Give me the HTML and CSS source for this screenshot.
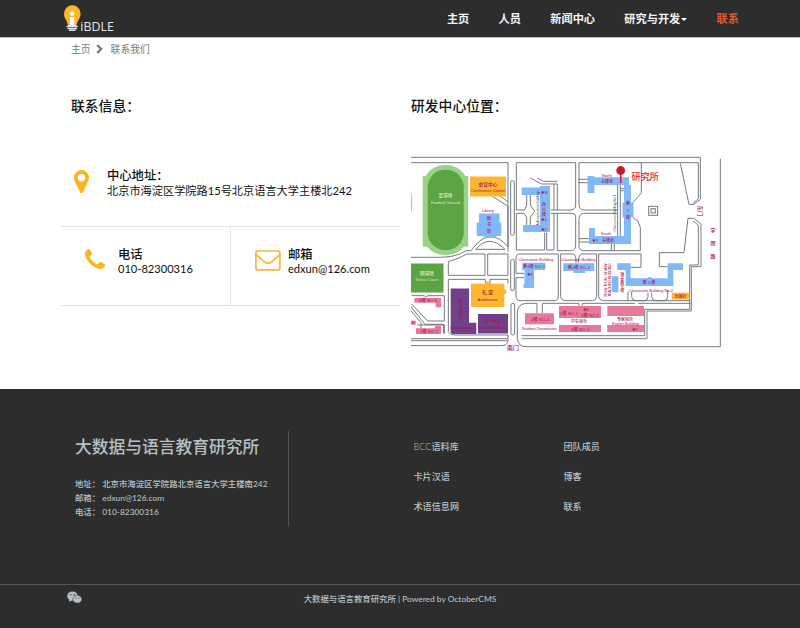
FILE: index.html
```html
<!DOCTYPE html>
<html lang="zh-CN">
<head>
<meta charset="utf-8">
<title>联系我们</title>
<link rel="stylesheet" href="styles.css">
</head>
<body>
<header class="header">
  <svg class="logo" width="54" height="32" viewBox="62 3 54 32">
    <path d="M67.500 24.500c0-4-3.500-5.500-3.500-11a8.300 8.300 0 0 1 16.600 0c0 5.500-3.600 7-3.600 11z" fill="#fdb62b"/>
    <circle cx="72.200" cy="13.500" r="2.200" fill="#fff"/>
    <path d="M70 17h4.300v7.500h2.200v1.500h-8.500v-1.500h2z" fill="#fff"/>
    <path d="M66.500 26.500h11.300M67.500 28.400h9.500M69 30.200h6.500" stroke="#d8dde2" stroke-width="1.500"/>
    <text x="80.300" y="31" textLength="33.500" lengthAdjust="spacingAndGlyphs" class="logo-text">iBDLE</text>
  </svg>
  <nav class="nav">
    <a>主页</a><a>人员</a><a>新闻中心</a><a class="drop">研究与开发<i class="caret"></i></a><a class="active">联系</a>
  </nav>
</header>
<div class="crumbs"><span>主页</span><svg width="7" height="10" viewBox="0 0 7 10"><path d="M1.200 1l4 4-4 4" fill="none" stroke="#777" stroke-width="2.200"/></svg><span>联系我们</span></div>
<main class="main">
  <section class="contact">
    <h2>联系信息：</h2>
    <div class="cell address">
      <svg width="15" height="23" viewBox="384 128 1024 1536" preserveAspectRatio="none"><path fill="#fcb51e" d="M1152 640q0-106-75-181t-181-75-181 75-75 181 75 181 181 75 181-75 75-181zm256 0q0 109-33 179l-364 774q-16 33-47.500 52t-67.500 19-67.500-19-46.500-52l-365-774q-33-70-33-179 0-212 150-362t362-150 362 150 150 362z"/></svg>
      <div><h3>中心地址：</h3><p class="addr-text">北京市海淀区学院路15号北京语言大学主楼北242</p></div>
    </div>
    <div class="pair">
      <div class="cell phone">
        <svg width="20" height="20" viewBox="192 128 1408 1408"><path fill="#fcb51e" d="M1600 1240q0 27-10 70.500t-21 68.500q-21 50-122 106-94 51-186 51-27 0-53-3.500t-57.500-12.500-47-14.500-55.500-20.500-49-18q-98-35-175-83-127-79-264-216t-216-264q-48-77-83-175-3-9-18-49t-20.500-55.500-14.500-47-12.500-57.500-3.500-53q0-92 51-186 56-101 106-122 25-11 68.500-21t70.500-10q14 0 21 3 18 6 53 76 11 19 30 54t35 63.500 31 53.500q3 4 17.500 25t21.500 35.500 7 28.500q0 20-28.500 50t-62 55-62 53-28.500 46q0 9 5 22.500t8.500 20.500 14 24 11.500 19q76 137 174 235t235 174q2 1 19 11.500t24 14 20.500 8.500 22.500 5q18 0 46-28.500t53-62 55-62 50-28.500q14 0 28.500 7t35.500 21.500 25 17.500q25 15 53.500 31t63.500 35 54 30q70 35 76 53 3 7 3 21z"/></svg>
        <div><h3>电话</h3><p>010-82300316</p></div>
      </div>
      <div class="cell mail">
        <svg width="26" height="21" viewBox="0 0 26 21"><g fill="none" stroke="#f9b83a" stroke-width="1.700"><rect x=".9" y="1" width="24" height="18.800" rx="2"/><path d="M1 4.500l9 7.800q3 2.200 6 0l9-7.800"/></g></svg>
        <div><h3>邮箱</h3><p>edxun@126.com</p></div>
      </div>
    </div>
  </section>
  <section class="location">
    <h2>研发中心位置：</h2>
    <svg class="map" width="320" height="205" viewBox="411 150 320 205">
      <g class="road" transform="translate(405 150) scale(.33333)">
        <path d="M18 22H886V148L866 163H852L826 40M18 38H309V305M334 38V180M334 38H512M522 38H880V146L864 160M946 26V590"/>
        <path d="M262 139L308 168M285 138L308 155M309 168V290M334 180H358L365 168V130M376 130V165L389 184L376 202V225M334 190H358L365 202V225M334 190V300H419V248M425 248V300H447V190M457 190V302H500Q512 300 512 285V200Q512 190 500 190H437M437 180H498Q512 178 512 165V38M376 84L410 102H457V180M397 84L415 94H457M447 102V180"/>
        <path d="M522 38V165Q524 180 536 180H636M522 285V205Q524 190 536 190H636M522 285Q522 302 536 302H706V232L698 212L684 203M709 38V128L698 142L684 158M520 88H550M520 98H550M522 266H552M522 276H552M619 280V302M628 280V302M638 104V258M646 104V258M646 116H660M646 122H660"/>
        <path d="M866 205H849L837 308H763V350H788M866 205L888 222V350H859V483H726V566H350M864 212L880 226V345H854V478H719V557H350"/>
        <path d="M18 322H105Q140 322 165 312L183 302H198Q252 225 309 290M212 298Q252 250 300 298ZM130 376V335Q165 325 185 312H240V376ZM248 312H309V376H248ZM309 400V388H255V402M241 402V388H130V545Q135 555 150 555H309V572Q306 587 290 587H18M18 566H309M18 572H306"/>
        <path d="M20 437H58L62 441L68 437H118V513H68L20 462M18 470L60 523H116V550M18 482L48 518V550M36 525H118V552"/>
        <path d="M460 312H345Q333 312 333 325V370H357M357 383H333V435Q333 452 345 452H452Q460 450 460 440V312"/>
        <path d="M513 338Q514 315 505 312H467V440Q467 450 480 452H562Q574 452 575 440V312H530Q520 316 520 338"/>
        <path d="M581 312H708V352H676M581 312V440Q583 452 595 452H669V425M680 425V440Q680 452 692 452H720Q729 450 729 440V428M740 428V440Q741 452 752 452H778Q788 450 788 440V420M669 452H856M856 460H700M690 460H532V472M522 472V460H412V490M396 490V460H362Q337 462 337 490V565Q340 590 360 590H946"/>
        <rect x="317" y="92" width="11" height="164" rx="5.500"/><rect x="317" y="328" width="11" height="94" rx="5.500"/><rect x="318" y="460" width="11" height="95" rx="5.500"/>
        <rect x="731" y="169" width="27" height="27"/><rect x="738" y="176" width="13" height="13"/>
      </g>
      <g fill="#9ad28a"><rect x="422.700" y="176" width="45.500" height="70.700"/><ellipse cx="445.500" cy="182" rx="21" ry="17"/><ellipse cx="445.500" cy="239" rx="21" ry="16"/></g>
      <rect x="427.700" y="169.700" width="36" height="80.500" rx="17.500" fill="#5ca344"/><rect x="411" y="263.500" width="32.500" height="29" fill="#5ca344"/>
      <path d="M411 191q2.500 10 0 24z" fill="#fdb733"/>
      <g fill="#fdb62f"><rect x="470" y="176.500" width="36" height="20"/><rect x="671.700" y="292.700" width="17.700" height="6.700"/><rect x="471" y="283.700" width="33.300" height="23.300"/><circle cx="487.700" cy="284.500" r="3"/><circle cx="504" cy="291.700" r="2.500"/></g>
      <g fill="#80b8fa">
        <path d="M479 213.500h20.500v9h1.800V236h-4.600l-3 2h-8l-3-2h-6v-13.500h2.300z"/>
        <path d="M521.700 187.500H540V186h10v46H523V225h17v-30H521.700z"/>
        <path d="M587.500 176h7v1.300H629V185h2v17.500h2.500v15H631V244h-42v-16h6v8h29v-18.500h-1.500v-15h1.500V185H594.500v8h-7z"/>
        <path d="M522.300 262.700h23v7.300H534v18h-10.500v-4h1V270h-2.200zM563.300 263.300h31v7.700h-9v2h-12v-2h-10zM611.700 276.300h6.700v16h-6.700zM617.300 263.300h13.300v15h16l3-1.500 3 1.500h15v-15H683v6.700h-9.600v16h-47.700v-16h-8.400z"/>
      </g>
      <path fill="#71408b" d="M450.700 288.500H469v34.200h7.300V334h-24l-1.600-1.500zM478 314h30v19.500h-30z"/>
      <path fill="#e7799b" d="M414.300 298H441v9.300h-5.300v-4.600h-21.400zM411 320.700h4.700v4H411zM416 328.300h19v-2.600h6V334h-25zM525 313.300h29v11h-29zM559 306h42v12h-42zM559 325h42v7h-42zM607.300 306H644v10h-36.700zM607.300 325H644v7h-36.700z"/>
      <g class="label pale"><text x="445.500" y="197" font-size="4.600">足球场</text><text x="445.500" y="203.500" textLength="29">Football Ground</text><text x="427" y="274.500" font-size="4.600">网球场</text><text x="426.500" y="281.300" textLength="23">Tennis Court</text></g>
      <g class="label">
        <text x="488" y="186" font-size="4.700">会议中心</text><text x="488" y="192" textLength="34">Conference Center</text><text x="488" y="212" textLength="12">Library</text>
        <text x="489" y="219.500">图</text><text x="489" y="226">书</text><text x="489" y="233">馆</text>
        <text x="544" y="206">办</text><text x="544" y="211">公</text><text x="544" y="216">楼</text><text x="544" y="194">★B</text><text x="544" y="221">★1</text><text x="544" y="231">★2</text>
        <text x="607" y="176.500">North</text><text x="607" y="183">主楼北</text><text x="628" y="205">教</text><text x="628" y="212">1</text><text x="628" y="219">楼</text><text x="606" y="235">South</text><text x="595" y="242">★3</text><text x="608" y="242">主楼南</text>
        <text x="536" y="261" textLength="35">Classroom Building</text><text x="534" y="267.500" textLength="22">教3楼 NO.3</text><text x="530" y="275.500">★5</text><text x="578.500" y="261" textLength="34">Classroom Building</text><text x="579" y="268.500" textLength="22">教4楼 NO.4</text>
        <text x="487.500" y="294" font-size="4.800">礼 堂</text><text x="487.500" y="301" textLength="20">Auditorium</text><text x="461" y="303">第</text><text x="461" y="307.500">二</text><text x="461" y="312">食</text><text x="461" y="316.500">堂</text><text x="462.500" y="329" textLength="25">Dining Hall No.2</text><text x="492.500" y="322.500">第一食堂</text><text x="492.500" y="329" textLength="27">Dining Hall No.1</text>
        <text x="428" y="302" textLength="18">6楼 NO.6</text><text x="429" y="333" textLength="18">7楼 NO.7</text><text x="413" y="324">8</text>
        <text x="540" y="320.500" textLength="18">4楼 NO.4</text><text x="539.500" y="330" textLength="35">Student Dormitories</text><text x="569" y="314.500" textLength="18">1楼 NO.1</text><text x="586" y="311">★6</text><text x="590" y="317" textLength="18">2楼 NO.2</text><text x="579" y="323.300">学生宿舍</text><text x="580" y="330.500" textLength="18">3楼 NO.3</text>
        <text x="625" y="320.500">专家宿舍</text><text x="625.500" y="324.500" textLength="27">Expert Building</text><text x="635" y="330.500">★7</text><text x="649" y="284">教 2 楼</text><text x="651" y="291.500" textLength="44">Classroom Building No.2</text><text x="680.500" y="298">出版社</text>
        <text transform="translate(606.500 280)rotate(-90)" textLength="33">RUN RUN SHAW</text><text transform="translate(610.500 280)rotate(-90)" textLength="34">TEACHING BUILDING</text><text x="622.300" y="276">逸</text><text x="622.300" y="280">夫</text><text x="622.300" y="284">教</text><text x="622.300" y="288">学</text><text x="622.300" y="292">楼</text>
        <text x="513" y="350" font-size="6">南门</text><text transform="translate(697.700 211)rotate(90)" font-size="5.500">东门</text><text x="713" y="231.500" font-size="5">学</text><text x="713" y="244.500" font-size="5">院</text><text x="713" y="257.500" font-size="5">路</text>
      </g>
      <g class="label dark"><text transform="translate(538.500 208.500)rotate(-90)" textLength="34">Administrative Building</text><text transform="translate(616 213)rotate(-90)" textLength="37">Classroom Building No.1</text></g>
      <path d="M620.700 170V183" stroke="#cf1627" stroke-width="1.500"/><circle cx="620.700" cy="170.500" r="4.400" fill="#d01626"/><text class="pin-label" x="631.500" y="179.500">研究所</text>
    </svg>
  </section>
</main>
<footer class="footer">
  <div class="foot-top">
    <div class="org"><h4>大数据与语言教育研究所</h4><p>地址： 北京市海淀区学院路北京语言大学主楼南242</p><p>邮箱： edxun@126.com</p><p>电话： 010-82300316</p></div>
    <div class="links"><a><span class="light">BCC</span>语料库</a><a>团队成员</a><a>卡片汉语</a><a>博客</a><a>术语信息网</a><a>联系</a></div>
  </div>
  <div class="foot-bottom">
    <svg width="15" height="13" viewBox="0 0 15 13"><path d="M2 11l.5-3 3 1z" fill="#b9c0c5"/><ellipse cx="5.500" cy="5" rx="5.300" ry="4.600" fill="#b9c0c5"/><path d="M12.500 12.500l-.4-2-2 .8z" fill="#b9c0c5"/><ellipse cx="10.300" cy="8.200" rx="4.500" ry="3.900" fill="#b9c0c5" stroke="#2d2d2d" stroke-width=".5"/><g fill="#2d2d2d"><circle cx="3.700" cy="3.700" r=".7"/><circle cx="7.200" cy="3.700" r=".7"/><circle cx="8.900" cy="7" r=".6"/><circle cx="11.800" cy="7" r=".6"/></g></svg>
    <p>大数据与语言教育研究所 | Powered by OctoberCMS</p>
  </div>
</footer>
</body>
</html>
```
FILE: styles.css
```css
* { box-sizing: border-box; }
body { margin: 0; width: 800px; height: 628px; overflow: hidden; background: #fff; color: #111; font-family: Lato, "Noto Sans CJK SC", sans-serif; }
h2, h3, h4, p { margin: 0; }
.header { height: 38px; background: #2d2d2d; border-bottom: 1px solid #bbb; padding: 3px 61px 0 62px; display: flex; justify-content: space-between; }
.logo { display: block; }
.logo-text { font: 400 13.5px "Open Sans", sans-serif; fill: #e8e8e8; }
.nav { display: flex; gap: 29.3px; height: 31px; align-items: center; font-size: 11.2px; font-weight: 700; line-height: 16px; color: #f4f4f4; }
.drop { display: flex; align-items: center; }
.caret { border: 3px solid transparent; border-top-color: #fff; border-bottom: 0; margin: 2px 0 0 1px; }
.active { color: #e4592d; }
.crumbs { height: 22px; padding-left: 71px; display: flex; align-items: center; font-size: 9.8px; line-height: 14px; color: #7c7c7c; }
.crumbs svg { margin: 0 8px 0 5px; }
.main { height: 329px; display: flex; padding-left: 61px; }
.contact { width: 339px; margin-right: 11px; }
h2 { font-size: 13.8px; line-height: 20px; font-weight: 500; padding-top: 36px; height: 56px; }
.contact h2 { padding-left: 10px; }
h3 { font-size: 12.3px; line-height: 16px; font-weight: 500; }
.cell p { font-size: 11.2px; line-height: 14px; }
.cell { display: flex; }
.cell svg { display: block; flex: none; }
.address { height: 111px; padding: 52px 0 0 13px; border-bottom: 1px solid #e2e2e2; }
.address svg { margin: 2px 18px 0 0; }
.cell .addr-text { white-space: nowrap; }
.pair { display: grid; grid-template-columns: 170px 169px; height: 79px; border-bottom: 1px solid #e2e2e2; }
.phone, .mail { padding: 20px 0 0 24px; }
.pair p { font-size: 11.1px; margin-top: -1px; }
.phone { border-right: 1px solid #e2e2e2; }
.phone svg { margin: 2px 13px 0 0; }
.mail svg { margin: 3px 7px 0 0; }
.map { display: block; margin-top: 34px; }
.road { fill: none; stroke: #6f7077; stroke-width: 2.8; }
.label { fill: #a80f46; font-size: 4px; font-family: "Liberation Sans", "Noto Sans CJK SC", sans-serif; font-weight: 500; text-anchor: middle; }
.pale { fill: #d8edcd; }
.dark { fill: #444; font-size: 3.4px; }
.pin-label { fill: #d72c39; font: 500 9.2px "Noto Sans CJK SC", sans-serif; }
.footer { height: 239px; background: #2d2d2d; color: #b6c0c5; }
.foot-top { height: 195px; padding: 42px 0 0 75px; display: flex; }
.org { width: 214px; height: 95px; border-right: 1px solid #555; margin-right: 124.5px; font-size: 8.38px; line-height: 14px; font-weight: 500; white-space: nowrap; }
h4 { font-size: 16.75px; line-height: 24px; font-weight: 500; padding-top: 4px; margin-bottom: 18px; }
.links { display: grid; grid-template-columns: 150px 150px; grid-auto-rows: 30px; padding-top: 1px; font-size: 9.1px; line-height: 30px; font-weight: 500; }
.light { font-weight: 300; }
.foot-bottom { height: 44px; border-top: 1px solid #555; display: grid; grid-template-columns: 82px 1fr 82px; }
.foot-bottom svg { display: block; margin: 6px 0 0 67px; }
.foot-bottom p { text-align: center; font-size: 8.4px; line-height: 14px; font-weight: 500; padding-top: 7px; }
```
